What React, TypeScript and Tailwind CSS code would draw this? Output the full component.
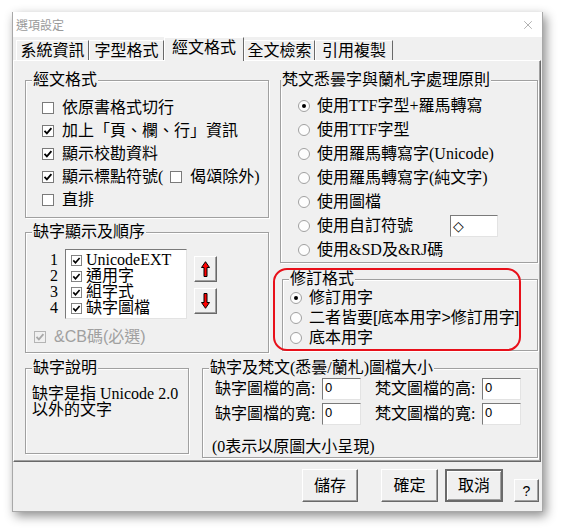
import { X } from "lucide-react"

function CheckBox({ checked = false, disabled = false, size = 12 }: { checked?: boolean; disabled?: boolean; size?: number }) {
    return (
        <svg width={size} height={size} viewBox="0 0 12 12" className="shrink-0">
            <rect x="0.5" y="0.5" width="11" height="11" fill={disabled ? "#f0f0f0" : "#fff"} stroke={disabled ? "#b4b4b4" : "#7a7a7a"} />
            {checked && (
                <path d="M2.5 5.8 L4.9 8.4 L9.4 3.2" fill="none" stroke={disabled ? "#a8a8a8" : "#000"} strokeWidth="1.8" />
            )}
        </svg>
    )
}

function Radio({ checked = false }: { checked?: boolean }) {
    return (
        <svg width="12" height="12" viewBox="0 0 12 12" className="shrink-0">
            <circle cx="6" cy="6" r="5.5" fill="#fdfdfd" stroke="#a0a0a0" />
            {checked && <circle cx="6" cy="6" r="2" fill="#000" />}
        </svg>
    )
}

function Group({ title, className = "", legend = "left-[6px]", children }: { title: string; className?: string; legend?: string; children?: React.ReactNode }) {
    return (
        <div className={`relative border border-[#a0a0a0] shadow-[1px_1px_0_#fff,inset_1px_1px_0_#fff] ${className}`}>
            <span className={`absolute -top-[9px] ${legend} bg-[#f0f0f0] px-px leading-[16px] whitespace-nowrap`}>{title}</span>
            {children}
        </div>
    )
}

function CheckRow({ text, checked }: { text: string; checked?: boolean }) {
    return (
        <div className="flex items-center h-[23px] gap-[8px]">
            <CheckBox checked={checked} />
            <span>{text}</span>
        </div>
    )
}

function RadioRow({ text, checked }: { text: string; checked?: boolean }) {
    return (
        <div className="flex items-center h-[24px]">
            <Radio checked={checked} />
            <span className="ml-[7px] whitespace-nowrap">{text}</span>
        </div>
    )
}

function Arrow({ down = false }: { down?: boolean }) {
    return (
        <svg width="9" height="16" viewBox="0 0 9 16" className={down ? "rotate-180" : ""}>
            <path d="M4.5 0.7 L8.5 6.5 L6 6.5 L6 15.5 L3 15.5 L3 6.5 L0.5 6.5 Z" fill="#ff0000" stroke="#000" strokeWidth="1" />
        </svg>
    )
}

const raised = "bg-[#f0f0f0] border border-t-white border-l-white border-r-[#696969] border-b-[#696969] shadow-[inset_-1px_-1px_0_#a0a0a0]"
const sunken = "bg-white border border-t-[#7a7a7a] border-l-[#7a7a7a] border-r-[#e3e3e3] border-b-[#e3e3e3]"

function Field({ value }: { value: string }) {
    return (
        <div className={`${sunken} w-[39px] h-[22px] pl-[2px] pt-[1px] font-['Liberation_Sans',sans-serif] text-[13px] leading-[15px]`}>{value}</div>
    )
}

export default function App() {
    const tabs = [
        { label: "系統資訊", w: "w-[73px]" },
        { label: "字型格式", w: "w-[75px]" },
        { label: "經文格式", w: "w-[80px]", active: true },
        { label: "全文檢索", w: "w-[71px]" },
        { label: "引用複製", w: "w-[78px]" },
    ]

    return (
        <div className="w-[563px] h-[532px] bg-white pt-[12px] pl-[12px] overflow-hidden font-['Liberation_Serif','Noto_Sans_CJK_TC',serif] text-[16px] leading-[16px] text-black">
            <div className="w-[531px] h-[500px] bg-[#f0f0f0] flex flex-col border-l border-r border-b border-[#a8a8a8] shadow-[3px_4px_10px_rgba(0,0,0,0.45)]">
                {/* title bar */}
                <div className="h-[25px] bg-white flex items-center justify-between pl-[3px] pr-[7px]">
                    <span className="font-['Noto_Sans_CJK_TC',sans-serif] text-[12px] leading-[14px] text-[#9a9a9a]">選項設定</span>
                    <X size={14} strokeWidth={1} color="#7a7a7a" />
                </div>

                {/* tabs */}
                <div className="h-[23px] flex items-end pl-[3px]">
                    {tabs.map((t) =>
                        t.active ? (
                            <div key={t.label} className={`${t.w} h-[24px] -mb-px relative z-10 bg-[#f0f0f0] border-t border-l border-r border-t-white border-l-white border-r-[#696969] flex justify-center pt-[2px]`}>
                                {t.label}
                            </div>
                        ) : (
                            <div key={t.label} className={`${t.w} h-[20px] border-t border-l border-r border-t-white border-l-white border-r-[#696969] flex justify-center pt-[2px]`}>
                                {t.label}
                            </div>
                        )
                    )}
                </div>

                {/* tab pane */}
                <div className="h-[402px] mr-[1px] border border-t-white border-l-white border-r-[#696969] border-b-[#696969] shadow-[inset_-1px_-1px_0_#a0a0a0] pl-[11px] pt-[19px]">
                    <div className="flex">
                        <div className="w-[244px] flex flex-col">
                            <Group title="經文格式" className="h-[138px] pt-[15px] pl-[16px]">
                                <CheckRow text="依原書格式切行" />
                                <CheckRow text="加上「頁、欄、行」資訊" checked />
                                <CheckRow text="顯示校勘資料" checked />
                                <div className="flex items-center h-[23px]">
                                    <CheckBox checked />
                                    <span className="ml-[8px]">顯示標點符號(</span>
                                    <span className="ml-[7px]"><CheckBox /></span>
                                    <span className="ml-[8px]">偈頌除外)</span>
                                </div>
                                <CheckRow text="直排" />
                            </Group>

                            <Group title="缺字顯示及順序" className="mt-[14px] h-[121px] pt-[16px] pl-[24px]">
                                <div className="flex">
                                    <div className="flex flex-col pt-[3px] w-[8px]">
                                        {["1", "2", "3", "4"].map((n) => (
                                            <div key={n} className="h-[16px] leading-[16px]">{n}</div>
                                        ))}
                                    </div>
                                    <div className={`${sunken} ml-[7px] w-[122px] h-[70px] pt-[2px] pl-[5px]`}>
                                        {["UnicodeEXT", "通用字", "組字式", "缺字圖檔"].map((n) => (
                                            <div key={n} className="flex items-center h-[16px] gap-[4px]">
                                                <CheckBox checked size={11} />
                                                <span>{n}</span>
                                            </div>
                                        ))}
                                    </div>
                                    <div className="ml-[7px] pt-[7px] flex flex-col gap-[6px]">
                                        <div className={`${raised} w-[23px] h-[26px] flex items-center justify-center`}>
                                            <Arrow />
                                        </div>
                                        <div className={`${raised} w-[23px] h-[26px] flex items-center justify-center`}>
                                            <Arrow down />
                                        </div>
                                    </div>
                                </div>
                                <div className="-ml-[16px] mt-[10px] flex items-center h-[16px] gap-[8px] text-[#a0a0a0] font-['Liberation_Sans','Noto_Sans_CJK_TC',sans-serif]">
                                    <CheckBox checked disabled />
                                    <span>&amp;CB碼(必選)</span>
                                </div>
                            </Group>
                        </div>

                        <div className="relative ml-[11px] w-[258px] flex flex-col">
                            <Group title="梵文悉曇字與蘭札字處理原則" legend="left-0" className="h-[183px] pt-[13px] pl-[17px]">
                                <RadioRow text="使用TTF字型+羅馬轉寫" checked />
                                <RadioRow text="使用TTF字型" />
                                <RadioRow text="使用羅馬轉寫字(Unicode)" />
                                <RadioRow text="使用羅馬轉寫字(純文字)" />
                                <RadioRow text="使用圖檔" />
                                <div className="flex items-center h-[24px]">
                                    <Radio />
                                    <span className="ml-[7px] w-[133px]">使用自訂符號</span>
                                    <div className={`${sunken} w-[48px] h-[22px] pl-[2px] flex items-center font-['DejaVu_Sans',sans-serif] text-[14px]`}>◇</div>
                                </div>
                                <RadioRow text="使用&SD及&RJ碼" />
                            </Group>

                            <Group title="修訂格式" className="mt-[16px] ml-[2px] w-[256px] h-[72px] pt-[8px] pl-[7px]">
                                {[
                                    { t: "修訂用字", c: true },
                                    { t: "二者皆要[底本用字>修訂用字]" },
                                    { t: "底本用字" },
                                ].map((r) => (
                                    <div key={r.t} className="flex items-center h-[20px]">
                                        <Radio checked={r.c} />
                                        <span className="ml-[7px] whitespace-nowrap font-['Liberation_Sans','Noto_Sans_CJK_TC',sans-serif]">{r.t}</span>
                                    </div>
                                ))}
                            </Group>

                            {/* red highlight annotation */}
                            <div className="absolute left-[-7px] top-[188px] w-[248px] h-[83px] border-2 border-[#e8101a] rounded-[14px] pointer-events-none" />
                        </div>
                    </div>

                    <div className="mt-[15px] flex">
                        <Group title="缺字說明" className="w-[164px] h-[86px] pt-[17px] pl-[6px]">
                            <div className="leading-[16px]">
                                <div>缺字是指 Unicode 2.0</div>
                                <div>以外的文字</div>
                            </div>
                        </Group>

                        <Group title="缺字及梵文(悉曇/蘭札)圖檔大小" className="ml-[13px] w-[336px] h-[90px] pt-[9px] pl-[12px]">
                            <div className="flex flex-col gap-[3px]">
                                {["高", "寬"].map((k) => (
                                    <div key={k} className="flex items-center h-[22px]">
                                        <span className="w-[107px] whitespace-nowrap">缺字圖檔的{k}:</span>
                                        <Field value="0" />
                                        <span className="ml-[14px] w-[107px] whitespace-nowrap">梵文圖檔的{k}:</span>
                                        <Field value="0" />
                                    </div>
                                ))}
                            </div>
                            <div className="mt-[14px] -ml-[3px]">(0表示以原圖大小呈現)</div>
                        </Group>
                    </div>
                </div>

                {/* button bar */}
                <div className="flex-1 flex items-end justify-end pb-[9px] pr-[3px]">
                    <button className={`${raised} w-[56px] h-[33px]`}>儲存</button>
                    <button className={`${raised} ml-[23px] w-[57px] h-[33px]`}>確定</button>
                    <button className="ml-[7px] w-[58px] h-[33px] bg-[#f0f0f0] border-2 border-[#6a6a6a] shadow-[inset_1px_1px_0_#fff,inset_-1px_-1px_0_#a0a0a0]">取消</button>
                    <button className={`${raised} ml-[11px] w-[25px] h-[23px] font-['Liberation_Sans',sans-serif] text-[14px]`}>?</button>
                </div>
            </div>
        </div>
    )
}
